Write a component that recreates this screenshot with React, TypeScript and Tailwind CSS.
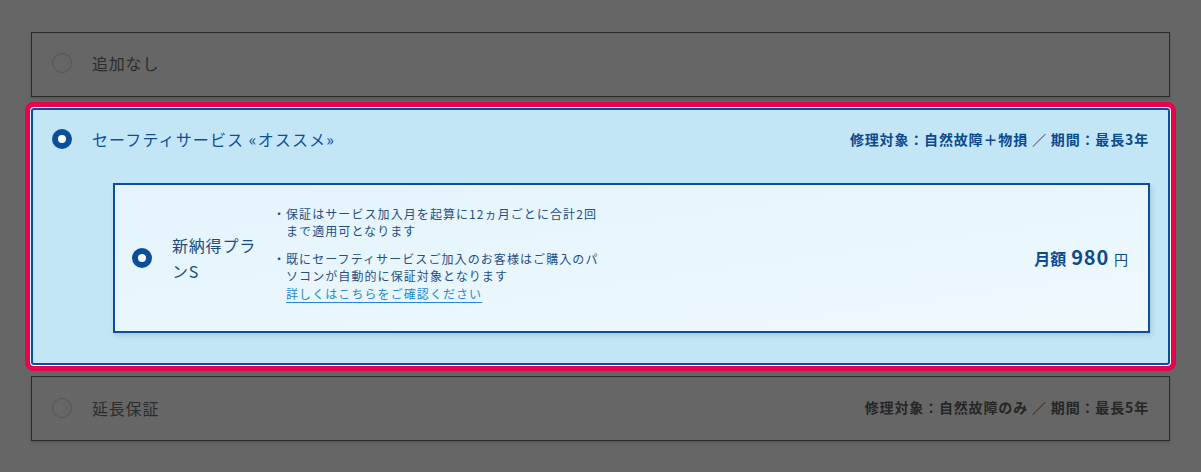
const jp = { fontFamily: '"Noto Sans CJK JP", "Noto Sans", sans-serif' };

function Radio({ checked, dim }: { checked?: boolean; dim?: boolean }) {
  if (checked) {
    return <span className="block w-5 h-5 rounded-full border-[6px] border-[#0b4f9c] bg-white shrink-0" />;
  }
  return (
    <span
      className={`block w-5 h-5 rounded-full border shrink-0 ${dim ? 'border-[#555] bg-[#666]' : 'border-gray-400 bg-white'}`}
    />
  );
}

export default function App() {
  return (
    <div className="w-[1201px] h-[472px] bg-[#666666] px-[31px] pt-[32px]" style={jp}>
      {/* 追加なし */}
      <div className="h-[65px] border border-[#2a2a2a] flex items-center pl-[20px] pb-[3px] gap-5 shadow-[0_2px_3px_rgba(0,0,0,0.15)]">
        <Radio dim />
        <span className="text-[16px] text-[#2c2c2c] tracking-[0.05em]">追加なし</span>
      </div>

      {/* セーフティサービス */}
      <div className="mt-[11px] rounded-[3px] border-2 border-[#0b4f9c] bg-[#c3e6f7] shadow-[0_0_0_1px_#ffffff,0_0_0_6px_#e8034d] pb-[30px]">
        <div className="h-[60px] flex items-center pl-[19px] pr-[19px] pb-[2px]">
          <Radio checked />
          <span className="ml-5 text-[16px] text-[#0f4f97] tracking-[0.07em]">セーフティサービス «オススメ»</span>
          <span className="ml-auto text-[14px] font-bold text-[#0c4a8e] tracking-[0.06em]">
            修理対象：自然故障＋物損 ／ 期間：最長3年
          </span>
        </div>
        <div className="mt-[13px] ml-[80px] mr-[18px] h-[150px] border-2 border-[#0b4f9c] bg-gradient-to-br from-[#e4f3fc] to-[#eef9fe] shadow-[2px_3px_5px_rgba(0,0,0,0.12)] flex items-center pl-[17px] pr-[20px]">
          <Radio checked />
          <div className="ml-5 w-[88px] text-[16px] leading-[26px] text-[#1d4b80] tracking-[0.05em]">新納得プランS</div>
          <div className="ml-[13px] w-[330px] text-[12px] leading-[17px] text-[#244f85] tracking-[0.09em] flex flex-col gap-[11px] mt-[-9px]">
            <div className="flex">
              <span className="w-[13px] shrink-0">・</span>
              <span>保証はサービス加入月を起算に12ヵ月ごとに合計2回まで適用可となります</span>
            </div>
            <div className="flex">
              <span className="w-[13px] shrink-0">・</span>
              <span>
                既にセーフティサービスご加入のお客様はご購入のパソコンが自動的に保証対象となります
                <br />
                <a className="inline-block mt-[1px] text-[#1f8ad0] underline underline-offset-[3px]">詳しくはこちらをご確認ください</a>
              </span>
            </div>
          </div>
          <div className="ml-auto flex items-baseline text-[#0c4a8e] mb-[2px]">
            <span className="text-[16px] font-bold">月額</span>
            <span className="ml-[5px] text-[20px] font-bold tracking-[0.04em]">980</span>
            <span className="ml-[5px] text-[14px]">円</span>
          </div>
        </div>
      </div>

      {/* 延長保証 */}
      <div className="mt-[11px] h-[65px] border border-[#2a2a2a] flex items-center pl-[20px] pr-[20px] pb-[2px] gap-5 shadow-[0_2px_3px_rgba(0,0,0,0.15)]">
        <Radio dim />
        <span className="text-[16px] text-[#2c2c2c] tracking-[0.05em]">延長保証</span>
        <span className="ml-auto text-[14px] font-bold text-[#262626] tracking-[0.06em]">
          修理対象：自然故障のみ ／ 期間：最長5年
        </span>
      </div>
    </div>
  );
}
